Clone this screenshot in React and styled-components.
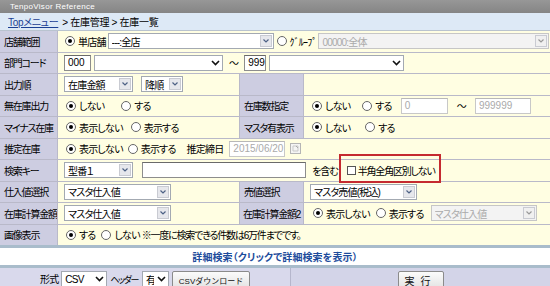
import React from 'react'
import styled, { createGlobalStyle } from 'styled-components'

const GlobalStyle = createGlobalStyle`
  html, body {
    margin: 0;
    padding: 0;
    background: #fff;
  }
  body {
    font-family: "Liberation Sans", "Noto Sans CJK JP", sans-serif;
    font-size: 10px;
    letter-spacing: -0.8px;
    color: #000;
    font-feature-settings: "palt";
    overflow: hidden;
  }
`;

const Page = styled.div`
  width: 550px;
  height: 286px;
  overflow: hidden;
`;

const TitleBar = styled.div`
  height: 13px;
  background: linear-gradient(#979797, #858585);
  color: #fff;
  font-size: 8px;
  line-height: 13px;
  padding-left: 10px;
  letter-spacing: 0.3px;
`;

const Breadcrumb = styled.div`
  height: 17px;
  background: #dde9f6;
  border-bottom: 1px solid #b9c3cf;
  display: flex;
  align-items: center;
  padding-left: 8px;
  gap: 4px;
  letter-spacing: -0.3px;
  a {
    color: #1b3f93;
    text-decoration: underline;
  }
`;

const FormGrid = styled.div`
  display: grid;
  grid-template-columns: 57px 181px 63px 1fr;
  grid-auto-rows: 20.5px;
  gap: 1px;
  background: #b9b9c9;
`;

const Label = styled.div`
  background: #cdcde1;
  display: flex;
  align-items: center;
  padding-left: ${p => p.$pad ?? 4}px;
  white-space: nowrap;
  overflow: hidden;
  letter-spacing: -1.2px;
`;

const Cell = styled.div`
  background: #fffee2;
  display: flex;
  align-items: center;
  gap: ${p => p.$gap ?? 3}px;
  padding-left: ${p => p.$pad ?? 6}px;
  grid-column: span ${p => p.$span || 1};
  white-space: nowrap;
`;

const RadioDot = styled.span`
  width: 10px;
  height: 10px;
  box-sizing: border-box;
  border: 1px solid #666;
  border-radius: 50%;
  background: #fff;
  display: inline-flex;
  align-items: center;
  justify-content: center;
  margin-right: 3px;
  &::after {
    content: "";
    width: 4px;
    height: 4px;
    border-radius: 50%;
    background: ${p => (p.$on ? '#000' : 'transparent')};
  }
`;

const RadioLabel = styled.span`
  display: inline-flex;
  align-items: center;
  margin-right: ${p => p.$mr ?? 6}px;
`;

const Radio = ({ on, children, mr }) => (
  <RadioLabel $mr={mr}>
    <RadioDot $on={on} />
    {children}
  </RadioLabel>
);

const SelectBox = styled.div`
  display: inline-flex;
  align-items: center;
  box-sizing: border-box;
  width: ${p => p.$w}px;
  height: 16px;
  border: 1px solid ${p => (p.$disabled ? '#c6c6c6' : '#a3a9b2')};
  background: ${p => (p.$disabled ? '#f3f3f3' : '#fff')};
  color: ${p => (p.$disabled ? '#aaa' : '#000')};
  padding-left: 3px;
  flex-shrink: 0;
  overflow: hidden;
`;

const SelectText = styled.span`
  flex: 1;
  overflow: hidden;
`;

const ArrowBox = styled.span`
  width: 12px;
  height: 12px;
  margin-right: 1px;
  background: ${p => (p.$disabled ? '#f0f0f0' : '#e6e7ec')};
  border: 1px solid #c9cbd2;
  box-sizing: border-box;
  display: flex;
  align-items: center;
  justify-content: center;
`;

const PlainArrow = styled.span`
  width: 14px;
  display: flex;
  align-items: center;
  justify-content: center;
`;

const Select = ({ w, children, disabled, plain }) => (
  <SelectBox $w={w} $disabled={disabled}>
    <SelectText>{children}</SelectText>
    {plain ? (
      <PlainArrow>
        <svg width="9" height="6" viewBox="0 0 9 6">
          <path d="M1 1l3.5 3.5L8 1" stroke="#111" strokeWidth="1.6" fill="none" />
        </svg>
      </PlainArrow>
    ) : (
      <ArrowBox $disabled={disabled}>
        <svg width="6" height="4" viewBox="0 0 6 4">
          <path d="M0.5 0.5l2.5 2.5 2.5-2.5" stroke={disabled ? '#999' : '#4d6185'} strokeWidth="1.2" fill="none" />
        </svg>
      </ArrowBox>
    )}
  </SelectBox>
);

const TextBox = styled.div`
  box-sizing: border-box;
  width: ${p => p.$w}px;
  height: 16px;
  margin-left: ${p => p.$ml ?? 0}px;
  border: 1px solid ${p => (p.$disabled ? '#c8c8c8' : '#8d8d8d')};
  border-top-color: ${p => (p.$disabled ? '#b8b8b8' : '#6a6a6a')};
  background: #fff;
  color: ${p => (p.$disabled ? '#aaa' : '#000')};
  padding-left: 3px;
  display: flex;
  align-items: center;
  flex-shrink: 0;
  letter-spacing: 0;
`;

const Tilde = styled.span`
  margin: 0 ${p => p.$m ?? 4}px;
`;

const Plain = styled.span`
  margin-left: ${p => p.$ml ?? 0}px;
  letter-spacing: ${p => p.$ls ?? -0.8}px;
`;

const CheckWrap = styled.span`
  position: relative;
  display: inline-flex;
  align-items: center;
  margin-left: 9px;
  gap: 2px;
  letter-spacing: -1.2px;
  &::before {
    content: "";
    position: absolute;
    top: -9px;
    bottom: -5px;
    left: -8px;
    right: -6px;
    border: 2px solid #c52a30;
    pointer-events: none;
  }
`;

const CheckBox = styled.span`
  width: 9px;
  height: 9px;
  box-sizing: border-box;
  border: 1px solid #555;
  background: #fff;
`;

const CalendarIcon = () => (
  <svg width="11" height="11" viewBox="0 0 11 11" style={{ marginLeft: 5 }}>
    <rect x="0.5" y="0.5" width="10" height="10" fill="#f4f4f4" stroke="#b5b5b5" />
    <path d="M3 3h5v5H3z" fill="none" stroke="#c9c9c9" />
    <path d="M6 3l2 2" stroke="#aaa" />
  </svg>
);

const DetailRow = styled.div`
  height: 17px;
  border-top: 3px solid #a9bccb;
  border-bottom: 3px solid #a9bccb;
  background: #fff;
  display: flex;
  align-items: center;
  justify-content: center;
  color: #1d4c9c;
  font-weight: bold;
  letter-spacing: 0.1px;
`;

const BottomBar = styled.div`
  display: flex;
  background: #d3d4e8;
  height: 30px;
`;

const BottomCell = styled.div`
  width: ${p => (p.$w ? `${p.$w}px` : 'auto')};
  flex: ${p => (p.$w ? 'none' : 1)};
  border-right: ${p => (p.$w ? '1px solid #b5b6cc' : 'none')};
  background: ${p => p.$bg || 'transparent'};
  display: flex;
  align-items: flex-start;
  justify-content: center;
  gap: 3px;
  padding-top: 3px;
`;

const BarText = styled.span`
  line-height: 18px;
  font-size: ${p => p.$fs ?? 10}px;
  letter-spacing: ${p => p.$ls ?? -0.8}px;
  margin-right: ${p => p.$mr ?? 0}px;
`;

const Button = styled.button`
  box-sizing: border-box;
  width: ${p => p.$w}px;
  height: 18px;
  padding: 0;
  border: 1px solid #8b8b8b;
  border-radius: 2px;
  background: linear-gradient(#fbfbfb, #e3e3e3);
  font-family: "Liberation Sans", "Noto Sans CJK JP", sans-serif;
  font-size: ${p => p.$fs || 10}px;
  letter-spacing: ${p => p.$ls || 0}px;
  color: #111;
`;

export default function App() {
  return (
    <Page>
      <GlobalStyle />
      <TitleBar>TenpoVisor Reference</TitleBar>
      <Breadcrumb>
        <a>Topメニュー</a>
        <span>&gt; 在庫管理 &gt; 在庫一覧</span>
      </Breadcrumb>
      <FormGrid>
        <Label>店舗範囲</Label>
        <Cell $span={3} $pad={7} $gap={0}>
          <Radio on mr={2}>単店舗</Radio>
          <Select w={166}>---:全店</Select>
          <span style={{ width: 3 }} />
          <Radio mr={2}>ｸﾞﾙｰﾌﾟ</Radio>
          <Select w={231} disabled>00000:全体</Select>
        </Cell>

        <Label>部門コード</Label>
        <Cell $span={3} $gap={3}>
          <TextBox $w={27}>000</TextBox>
          <Select w={129} plain />
          <Tilde $m={3}>～</Tilde>
          <TextBox $w={22}>999</TextBox>
          <Select w={135} plain />
        </Cell>

        <Label>出力順</Label>
        <Cell $gap={8}>
          <Select w={69}>在庫金額</Select>
          <Select w={42}>降順</Select>
        </Cell>
        <Label />
        <Cell />

        <Label>無在庫出力</Label>
        <Cell $pad={8}>
          <Radio on mr={14}>しない</Radio>
          <Radio>する</Radio>
        </Cell>
        <Label>在庫数指定</Label>
        <Cell $pad={8} $gap={0}>
          <Radio on mr={12}>しない</Radio>
          <Radio mr={9}>する</Radio>
          <TextBox $w={47} $disabled>0</TextBox>
          <Tilde $m={9}>～</Tilde>
          <TextBox $w={56} $disabled>999999</TextBox>
        </Cell>

        <Label>マイナス在庫</Label>
        <Cell $pad={8}>
          <Radio on mr={5}>表示しない</Radio>
          <Radio>表示する</Radio>
        </Cell>
        <Label>マスタ有表示</Label>
        <Cell $pad={8}>
          <Radio on mr={12}>しない</Radio>
          <Radio>する</Radio>
        </Cell>

        <Label>推定在庫</Label>
        <Cell $span={3} $pad={8} $gap={0}>
          <Radio on mr={5}>表示しない</Radio>
          <Radio mr={11}>表示する</Radio>
          <span>推定締日</span>
          <TextBox $w={56} $disabled $ml={6}>2015/06/20</TextBox>
          <CalendarIcon />
        </Cell>

        <Label>検索キー</Label>
        <Cell $span={3} $gap={0}>
          <Select w={69}>型番１</Select>
          <TextBox $w={164} $ml={9} />
          <Plain $ml={6} $ls={-1}>を含む</Plain>
          <CheckWrap>
            <CheckBox />
            <span>半角全角区別しない</span>
          </CheckWrap>
        </Cell>

        <Label>仕入値選択</Label>
        <Cell>
          <Select w={107}>マスタ仕入値</Select>
        </Cell>
        <Label>売値選択</Label>
        <Cell>
          <Select w={107}>マスタ売値(税込)</Select>
        </Cell>

        <Label>在庫計算金額</Label>
        <Cell>
          <Select w={107}>マスタ仕入値</Select>
        </Cell>
        <Label $pad={3}>在庫計算金額2</Label>
        <Cell $pad={9} $gap={0}>
          <Radio on mr={6}>表示しない</Radio>
          <Radio mr={7}>表示する</Radio>
          <Select w={106} disabled>マスタ仕入値</Select>
        </Cell>

        <Label>画像表示</Label>
        <Cell $span={3} $pad={8} $gap={0}>
          <Radio on mr={6}>する</Radio>
          <Radio mr={2}>しない</Radio>
          <Plain $ls={-1.2}>※一度に検索できる件数は6万件までです。</Plain>
        </Cell>
      </FormGrid>
      <DetailRow>詳細検索（クリックで詳細検索を表示）</DetailRow>
      <BottomBar>
        <BottomCell $w={290} $bg="#d9d9ec">
          <BarText>形式</BarText>
          <Select w={46} plain>CSV</Select>
          <BarText $fs={9} $ls={-1.4} $mr={1}>ヘッダー</BarText>
          <Select w={27} plain>有</Select>
          <Button $w={78} $fs={8}>CSVダウンロード</Button>
        </BottomCell>
        <BottomCell>
          <Button $w={46} $ls={6}>実行</Button>
        </BottomCell>
      </BottomBar>
    </Page>
  )
}
